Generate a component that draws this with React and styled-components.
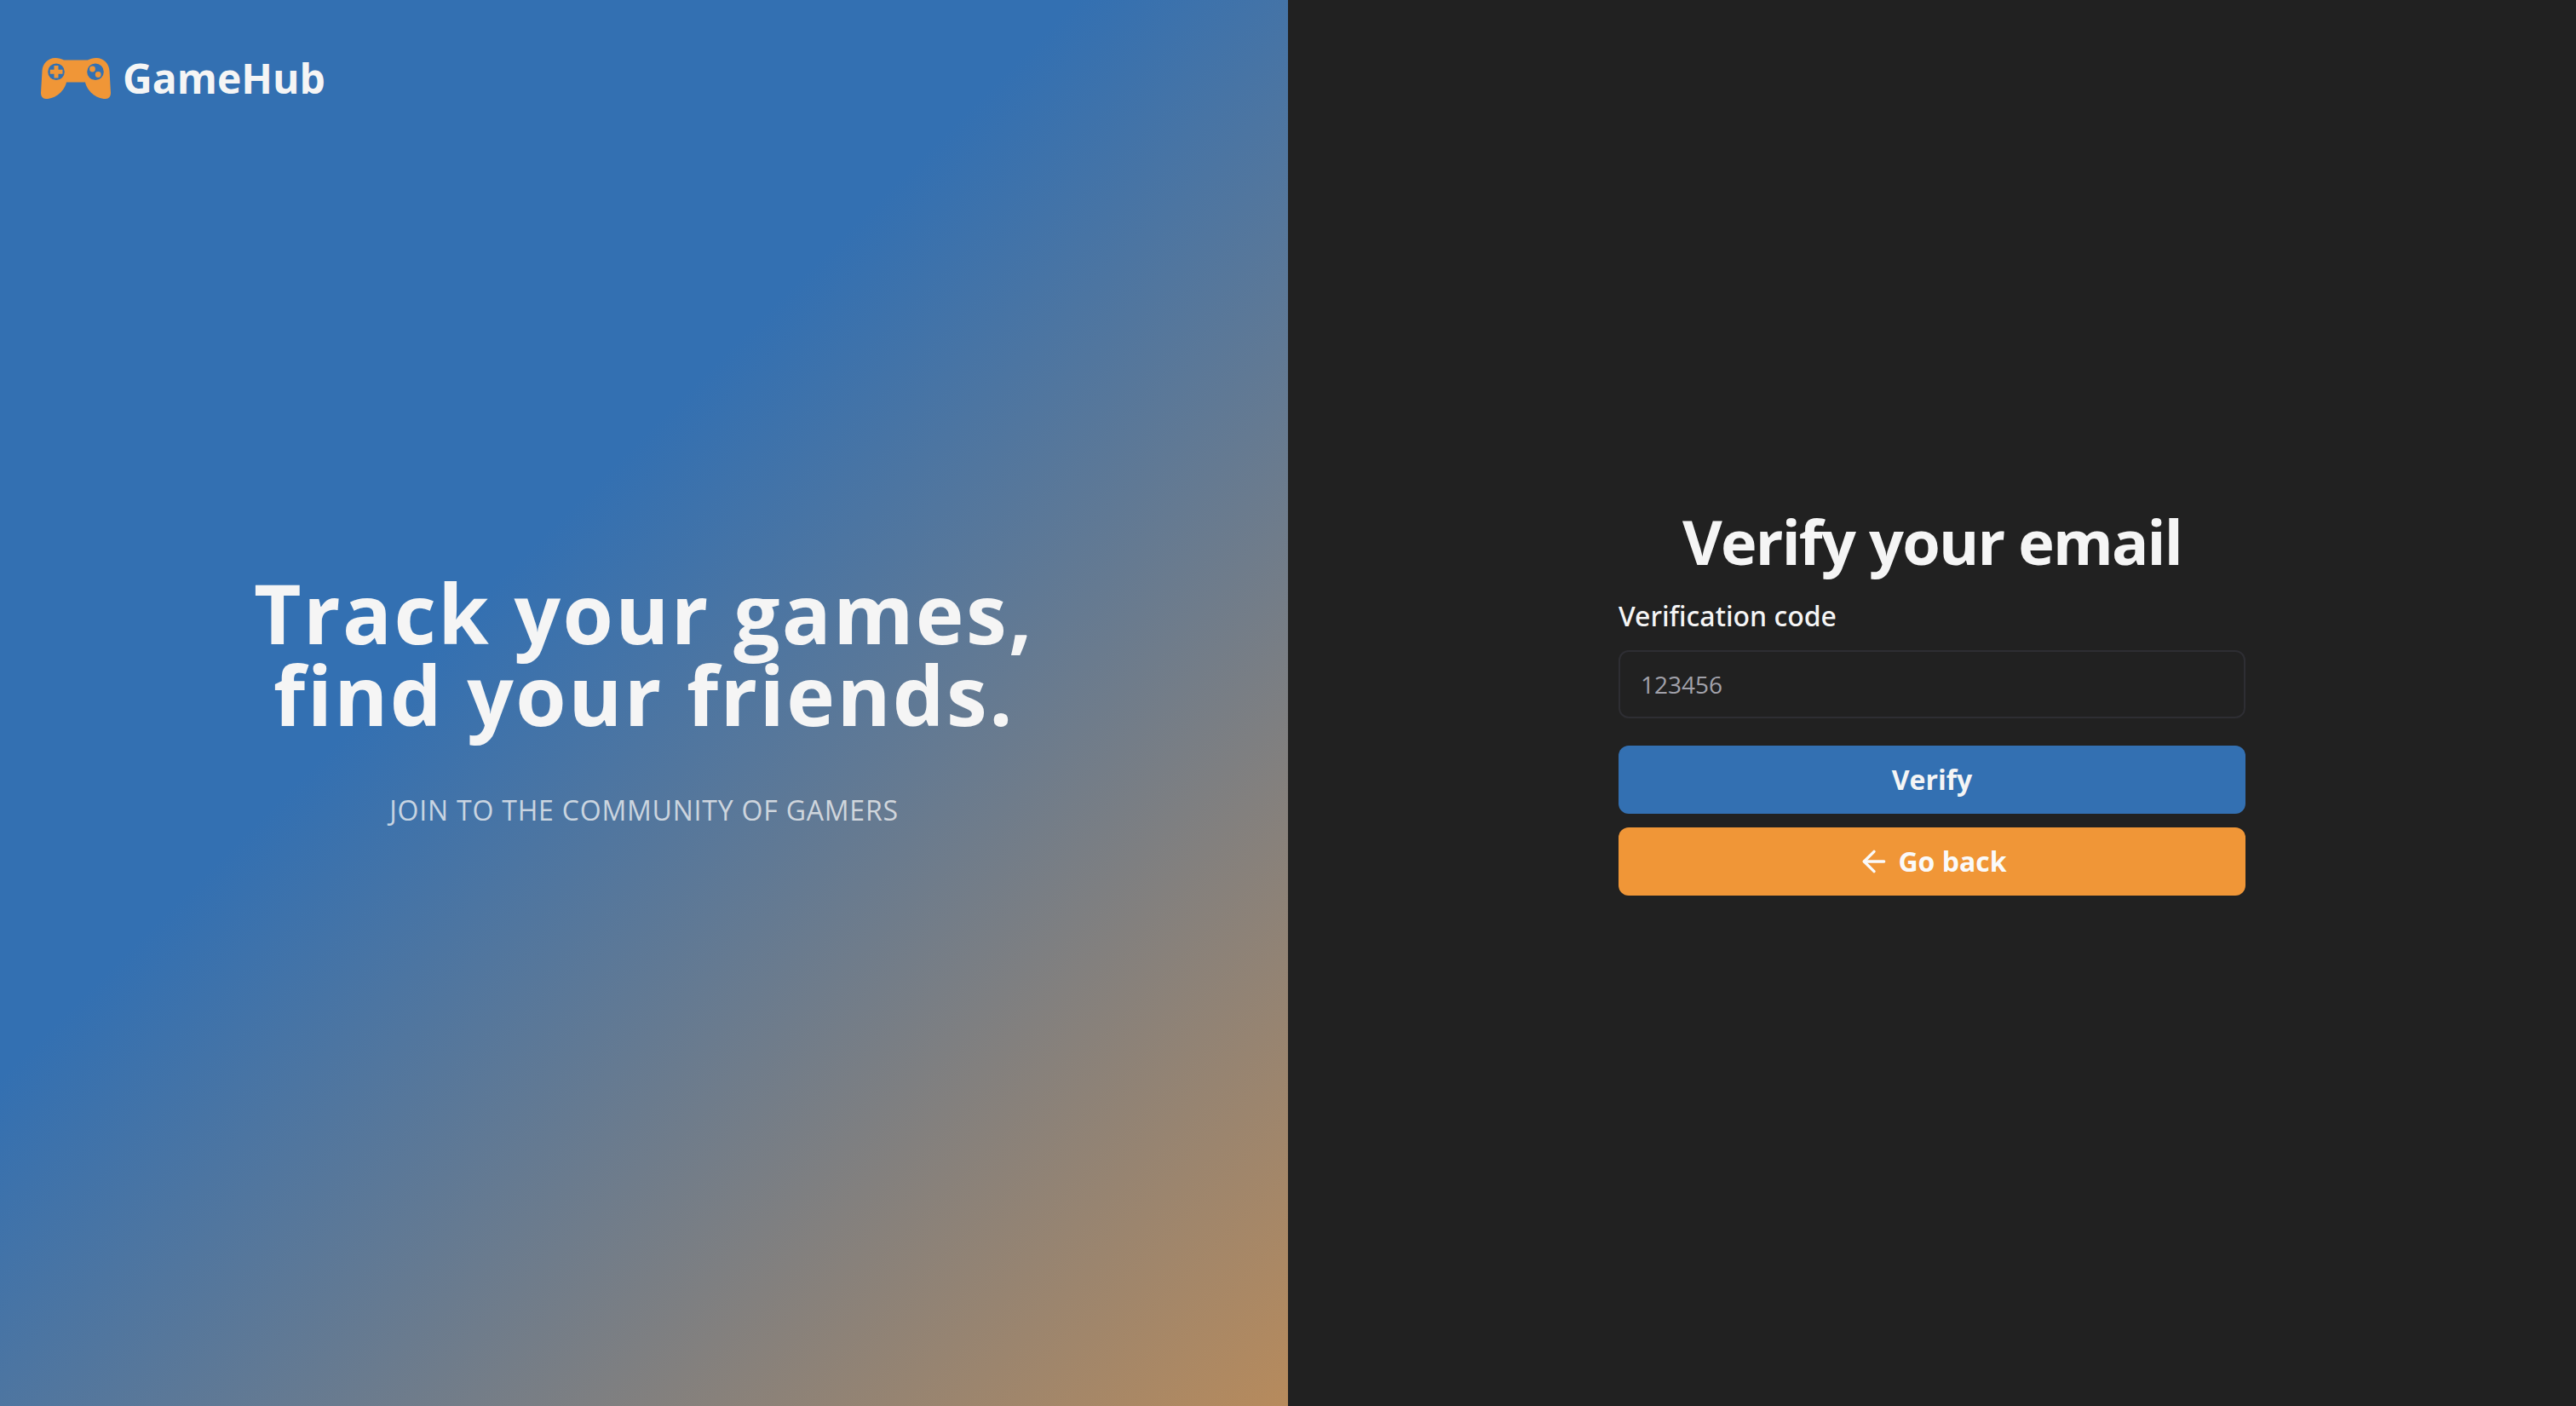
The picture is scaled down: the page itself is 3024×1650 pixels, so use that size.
import React from "react";
import styled, { createGlobalStyle } from "styled-components";
import { ArrowLeft } from "lucide-react";

const GlobalStyle = createGlobalStyle`
  *, *::before, *::after { box-sizing: border-box; }
  body {
    margin: 0;
    background: #212121;
    color: #f5f5f5;
    font-family: "Open Sans", "Noto Sans", sans-serif;
    -webkit-font-smoothing: antialiased;
  }
`;

const Page = styled.main`
  display: grid;
  grid-template-columns: 1fr 1fr;
  min-height: 100vh;
`;

const Hero = styled.section`
  display: grid;
  grid-template-rows: 1fr auto 1fr;
  padding: 48px;
  background: linear-gradient(135deg, #3370b2 40%, #f09637 126%);
`;

const Brand = styled.a`
  display: flex;
  align-items: center;
  align-self: start;
  justify-self: start;
  gap: 14px;
  height: 88px;
  color: inherit;
  font-size: 48px;
  font-weight: 700;
  line-height: 64px;
  text-decoration: none;
`;

const BrandIcon = styled.svg`
  width: 82px;
  height: 48px;
  fill: #f09637;
`;

const Pitch = styled.div`
  display: flex;
  flex-direction: column;
  align-items: center;
  gap: 60px;
  text-align: center;
`;

const Headline = styled.h1`
  margin: 0;
  font-size: 96px;
  font-weight: 700;
  line-height: 96px;
  letter-spacing: 0.025em;
`;

const Tagline = styled.p`
  margin: 0;
  color: rgba(245, 245, 245, 0.75);
  font-size: 32px;
  line-height: 56px;
  letter-spacing: 0.025em;
  text-transform: uppercase;
`;

const Panel = styled.section`
  display: flex;
  align-items: center;
  justify-content: center;
  padding: 48px;
`;

const Form = styled.form`
  display: flex;
  flex-direction: column;
  width: 100%;
  max-width: 736px;
`;

const Title = styled.h2`
  margin: 0 0 28px;
  font-size: 72px;
  font-weight: 700;
  line-height: 72px;
  letter-spacing: -0.025em;
  text-align: center;
`;

const Field = styled.div`
  display: flex;
  flex-direction: column;
  gap: 16px;
  margin-bottom: 32px;
`;

const Label = styled.label`
  font-family: "Noto Sans", "Open Sans", sans-serif;
  font-size: 32px;
  font-weight: 500;
  line-height: 48px;
`;

const Input = styled.input`
  height: 80px;
  padding: 0 24px;
  border: 2px solid #2e2e33;
  border-radius: 12px;
  background: transparent;
  color: inherit;
  font-family: inherit;
  font-size: 28px;
  &::placeholder { color: #a1a1aa; opacity: 1; }
`;

const Actions = styled.div`
  display: flex;
  flex-direction: column;
  gap: 16px;
`;

const Button = styled.button`
  display: flex;
  align-items: center;
  justify-content: center;
  gap: 8px;
  height: 80px;
  border: 0;
  border-radius: 12px;
  background: ${({ $tone }) => ($tone === "accent" ? "#f09637" : "#3370b2")};
  color: ${({ $tone }) => ($tone === "accent" ? "#fafafa" : "#f5f5f5")};
  font-family: inherit;
  font-size: 32px;
  font-weight: 700;
  line-height: 48px;
  cursor: pointer;
`;

function Gamepad() {
  return (
    <BrandIcon viewBox="0 0 82 48" aria-hidden="true">
      <path
        fillRule="evenodd"
        d="M17 0C21 0 24 1 27 2.6H55C58 1 61 0 65 0C74 0 80 7 80.500 15L82 41C82 45 80 48 76 48C64 48 54 38 52 28.500H30C28 38 18 48 6 48C2 48 0 45 0 41L1.500 15C2 7 8 0 17 0ZM18 6.500a9.800 9.800 0 1 0 0 19.600a9.800 9.800 0 1 0 0-19.600ZM64 6.500a9.800 9.800 0 1 0 0 19.600a9.800 9.800 0 1 0 0-19.600Z"
      />
      <path d="M15.500 9h5v4.800H25.500v5H20.500V23.500h-5V18.800H10.800v-5H15.500Z" />
      <circle cx="60.500" cy="13" r="3.400" />
      <circle cx="67.200" cy="19.500" r="3.400" />
    </BrandIcon>
  );
}

export default function App() {
  return (
    <>
      <GlobalStyle />
      <Page>
        <Hero>
          <Brand href="#">
            <Gamepad />
            GameHub
          </Brand>
          <Pitch>
            <Headline>
              Track your games,
              <br />
              find your friends.
            </Headline>
            <Tagline>Join to the community of gamers</Tagline>
          </Pitch>
        </Hero>
        <Panel>
          <Form onSubmit={(event) => event.preventDefault()}>
            <Title>Verify your email</Title>
            <Field>
              <Label htmlFor="code">Verification code</Label>
              <Input id="code" name="code" inputMode="numeric" placeholder="123456" />
            </Field>
            <Actions>
              <Button type="submit">Verify</Button>
              <Button type="button" $tone="accent">
                <ArrowLeft size={40} aria-hidden="true" />
                Go back
              </Button>
            </Actions>
          </Form>
        </Panel>
      </Page>
    </>
  );
}
